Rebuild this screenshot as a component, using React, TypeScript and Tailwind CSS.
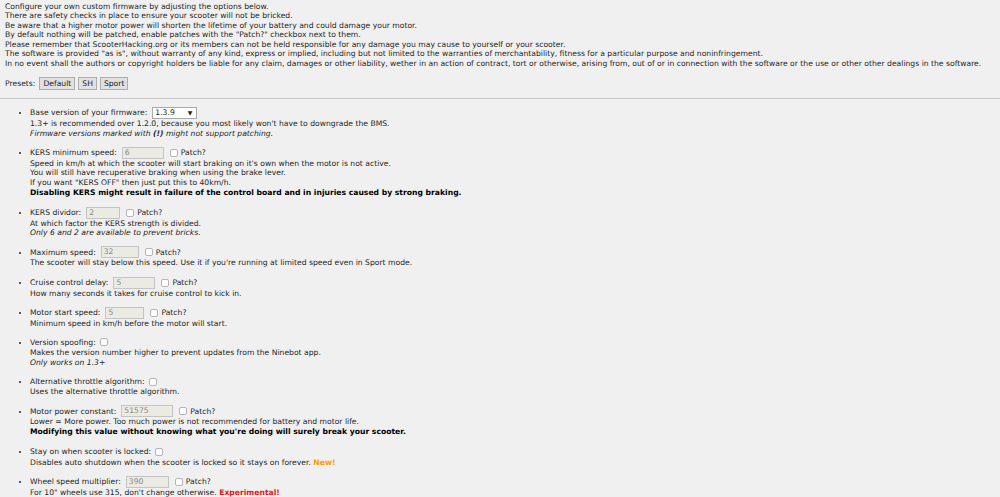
import React from 'react';

type Field = {
  label: string;
  value?: string;
  width?: string;
  patch?: boolean;
  check?: boolean;
  select?: boolean;
  lines: React.ReactNode[];
};

const fields: Field[] = [
  {
    label: 'Base version of your firmware:',
    select: true,
    lines: [
      "1.3+ is recommended over 1.2.0, because you most likely won't have to downgrade the BMS.",
      <i key="i">Firmware versions marked with <b>(!)</b> might not support patching.</i>,
    ],
  },
  {
    label: 'KERS minimum speed:',
    value: '6',
    patch: true,
    lines: [
      "Speed in km/h at which the scooter will start braking on it's own when the motor is not active.",
      'You will still have recuperative braking when using the brake lever.',
      'If you want "KERS OFF" then just put this to 40km/h.',
      <b key="b" className="block leading-[10.6px] text-black">Disabling KERS might result in failure of the control board and in injuries caused by strong braking.</b>,
    ],
  },
  {
    label: 'KERS dividor:',
    value: '2',
    width: 'w-[34px]',
    patch: true,
    lines: ['At which factor the KERS strength is divided.', <i key="i">Only 6 and 2 are available to prevent bricks.</i>],
  },
  {
    label: 'Maximum speed:',
    value: '32',
    width: 'w-[38px]',
    patch: true,
    lines: ["The scooter will stay below this speed. Use it if you're running at limited speed even in Sport mode."],
  },
  {
    label: 'Cruise control delay:',
    value: '5',
    width: 'w-[42px]',
    patch: true,
    lines: ['How many seconds it takes for cruise control to kick in.'],
  },
  {
    label: 'Motor start speed:',
    value: '5',
    width: 'w-[39px]',
    patch: true,
    lines: ['Minimum speed in km/h before the motor will start.'],
  },
  {
    label: 'Version spoofing:',
    check: true,
    lines: ['Makes the version number higher to prevent updates from the Ninebot app.', <i key="i">Only works on 1.3+</i>],
  },
  {
    label: 'Alternative throttle algorithm:',
    check: true,
    lines: ['Uses the alternative throttle algorithm.'],
  },
  {
    label: 'Motor power constant:',
    value: '51575',
    width: 'w-[52px]',
    patch: true,
    lines: [
      'Lower = More power. Too much power is not recommended for battery and motor life.',
      <b key="b" className="block leading-[10.6px] text-black">Modifying this value without knowing what you're doing will surely break your scooter.</b>,
    ],
  },
  {
    label: 'Stay on when scooter is locked:',
    check: true,
    lines: [
      <span key="s">
        Disables auto shutdown when the scooter is locked so it stays on forever.{' '}
        <b className="text-[#ff9900]">New!</b>
      </span>,
    ],
  },
  {
    label: 'Wheel speed multiplier:',
    value: '390',
    width: 'w-[43px]',
    patch: true,
    lines: [
      <span key="s">
        For 10" wheels use 315, don't change otherwise. <b className="text-[#ee1111]">Experimental!</b>
      </span>,
    ],
  },
];

function Box() {
  return <span className="inline-block w-[8px] h-[8px] border border-[#b5b5b5] rounded-[2px] bg-white" />;
}

export default function App() {
  return (
    <div
      className="h-[497px] overflow-hidden bg-[#f0f0f0] text-[#262626] text-[7.65px] leading-[9.6px] pt-[1.5px]"
      style={{ fontFamily: '"DejaVu Sans", Verdana, sans-serif' }}
    >
      <div className="px-[5px]">
        <p>Configure your own custom firmware by adjusting the options below.</p>
        <p>There are safety checks in place to ensure your scooter will not be bricked.</p>
        <p>Be aware that a higher motor power will shorten the lifetime of your battery and could damage your motor.</p>
        <p>By default nothing will be patched, enable patches with the "Patch?" checkbox next to them.</p>
        <p>Please remember that ScooterHacking.org or its members can not be held responsible for any damage you may cause to yourself or your scooter.</p>
        <p>The software is provided "as is", without warranty of any kind, express or implied, including but not limited to the warranties of merchantability, fitness for a particular purpose and noninfringement.</p>
        <p>In no event shall the authors or copyright holders be liable for any claim, damages or other liability, wether in an action of contract, tort or otherwise, arising from, out of or in connection with the software or the use or other other dealings in the software.</p>

        <div className="flex items-center gap-[3px] mt-[8px] h-[14px]">
          <span className="mr-[1px]">Presets:</span>
          {['Default', 'SH', 'Sport'].map((p) => (
            <button
              key={p}
              className="h-[13px] px-[3px] bg-[#e1e1e1] border border-[#adadad] text-[#222] leading-[11px]"
            >
              {p}
            </button>
          ))}
        </div>
      </div>

      <hr className="mt-[7px] border-0 border-t border-[#c8c8c8]" />

      <ul className="list-disc pl-[30px] pt-[8.5px]">
        {fields.map((f, i) => (
          <li key={i} className="mb-[8.5px]">
            <div className={`flex items-center gap-[4px] ${f.check ? 'h-[11.5px]' : 'h-[12px]'}`}>
              <span>{f.label}</span>
              {f.select && (
                <span className="ml-[1px] flex items-center justify-between w-[45px] h-[12px] bg-white border border-[#a9a9a9] px-[2px] text-[#222]">
                  1.3.9<span className="text-[6px] mr-[2px]">▼</span>
                </span>
              )}
              {f.value !== undefined && (
                <span
                  className={`ml-[1px] ${f.width ?? 'w-[42px]'} h-[12px] bg-[#ebebe4] border border-[#c4c4c4] px-[2px] text-[#8a8a8a] leading-[10px]`}
                >
                  {f.value}
                </span>
              )}
              {f.check && <Box />}
              {f.patch && (
                <span className="flex items-center gap-[3px] ml-[2px]">
                  <Box />
                  Patch?
                </span>
              )}
            </div>
            {f.lines.map((l, j) => (
              <div key={j}>{l}</div>
            ))}
          </li>
        ))}
      </ul>
    </div>
  );
}
